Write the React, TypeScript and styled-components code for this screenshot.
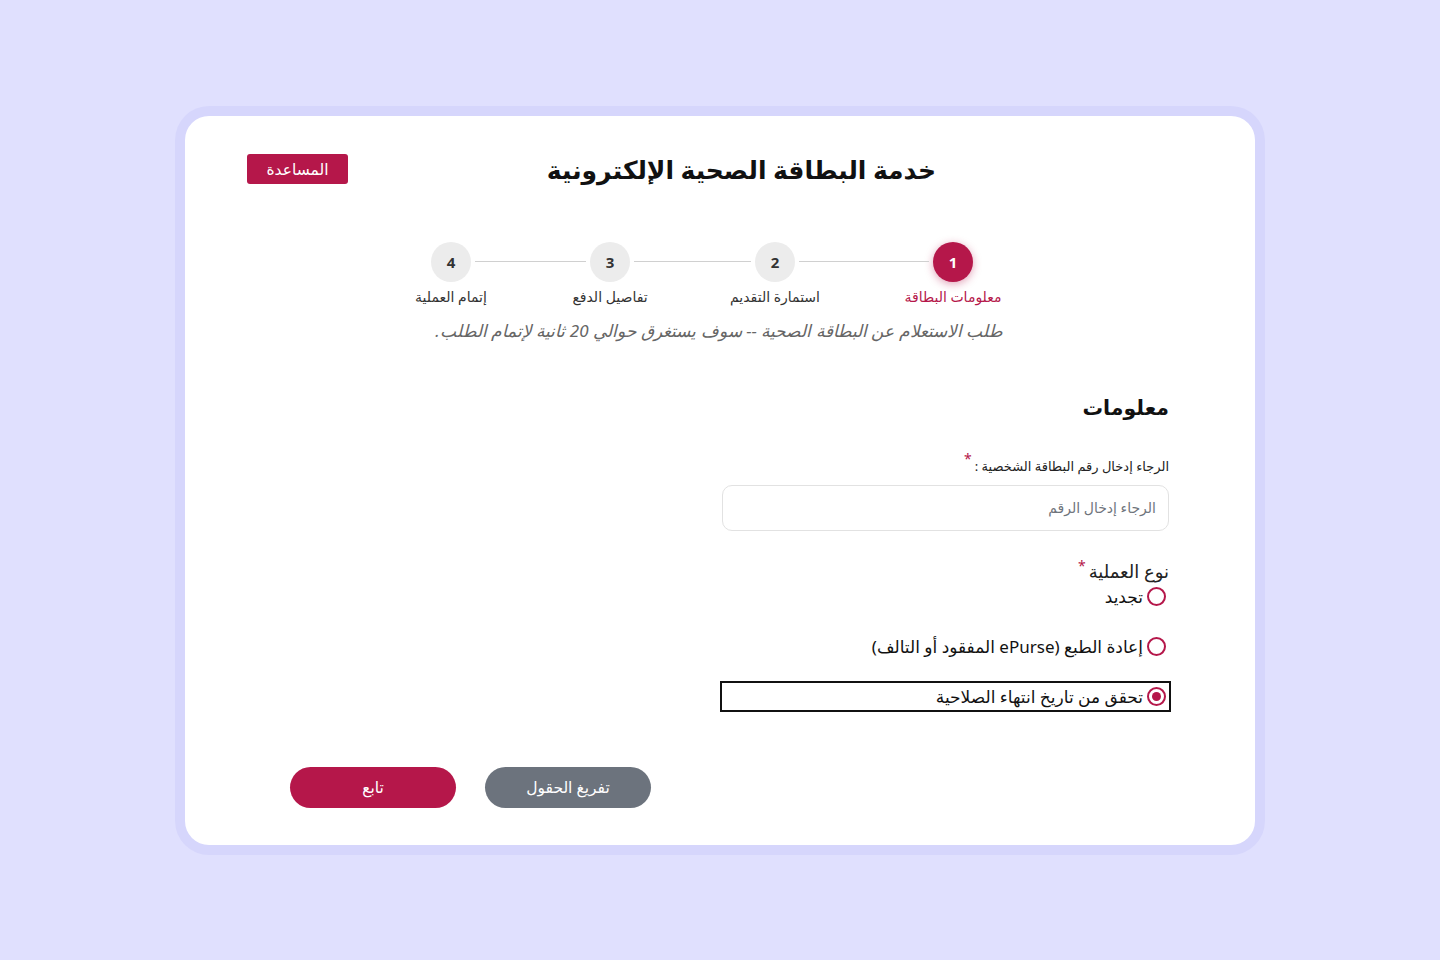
import React from "react";
import styled, { createGlobalStyle, css } from "styled-components";

const CRIMSON = "#b5174a";

const GlobalStyle = createGlobalStyle`
  html, body { margin: 0; padding: 0; }
  body {
    background: #e0e0fe;
    font-family: "Noto Sans", "DejaVu Sans", sans-serif;
    color: #111;
  }
  * { box-sizing: border-box; }
`;

const Page = styled.div`
  min-height: 100vh;
  display: flex;
  align-items: center;
  justify-content: center;
`;

const Frame = styled.div`
  padding: 10px;
  background: #d6d6fc;
  border-radius: 34px;
`;

const Card = styled.div`
  direction: rtl;
  width: 1070px;
  background: #fff;
  border-radius: 24px;
  padding: 38px 0 37px 0;
`;

const Header = styled.div`
  display: flex;
  align-items: center;
  justify-content: space-between;
  padding: 0 319px 0 62px;
  height: 30px;
`;

const Title = styled.h1`
  margin: 0;
  font-size: 25px;
  line-height: 30px;
  font-weight: 700;
  color: #111;
`;

const HelpButton = styled.button`
  width: 101px;
  height: 30px;
  border: none;
  border-radius: 3px;
  background: ${CRIMSON};
  color: #fff;
  font-family: inherit;
  font-size: 15.5px;
  line-height: 30px;
  padding: 0;
  cursor: pointer;
`;

const Stepper = styled.div`
  display: flex;
  align-items: flex-start;
  margin-top: 58px;
  padding-right: 282px;
`;

const Step = styled.div`
  width: 40px;
  display: flex;
  flex-direction: column;
  align-items: center;
`;

const Circle = styled.div<{ $active?: boolean }>`
  width: 40px;
  height: 40px;
  border-radius: 50%;
  display: flex;
  align-items: center;
  justify-content: center;
  font-family: "Noto Sans", sans-serif;
  font-weight: 700;
  font-size: 15px;
  ${(p) =>
    p.$active
      ? css`
          background: ${CRIMSON};
          color: #fff;
          box-shadow: 0 2px 8px rgba(181, 23, 74, 0.4);
        `
      : css`
          background: #ececec;
          color: #333;
        `}
`;

const StepLabel = styled.div<{ $active?: boolean }>`
  margin-top: 5px;
  white-space: nowrap;
  font-size: 14px;
  line-height: 20px;
  color: ${(p) => (p.$active ? CRIMSON : "#333")};
`;

const Connector = styled.div<{ $w: number }>`
  width: ${(p) => p.$w}px;
  height: 1px;
  margin: 19.5px 4px 0;
  background: #d0d0d0;
`;

const Description = styled.p`
  margin: 12px 0 0;
  padding-right: 252px;
  font-size: 17px;
  line-height: 24px;
  font-style: italic;
  color: #666;
`;

const FormSection = styled.div`
  width: 447px;
  margin-right: 86px;
  margin-top: 50px;
`;

const SectionTitle = styled.h2`
  margin: 0;
  font-size: 20.5px;
  line-height: 28px;
  font-weight: 700;
`;

const FieldLabel = styled.label`
  display: block;
  margin-top: 35px;
  font-size: 13px;
  line-height: 20px;
  color: #222;
`;

const Star = styled.span`
  display: inline-block;
  color: ${CRIMSON};
  font-size: 14px;
  line-height: 0;
  margin-right: 3px;
  position: relative;
  top: -7px;
`;

const TextInput = styled.input`
  display: block;
  width: 100%;
  height: 46px;
  margin-top: 9px;
  border: 1px solid #e2e2e2;
  border-radius: 10px;
  padding: 0 12px;
  font-family: inherit;
  font-size: 14px;
  direction: rtl;
  &::placeholder { color: #6f747c; }
  &:focus { outline: none; }
`;

const GroupLabel = styled.div`
  margin-top: 28px;
  font-size: 18px;
  line-height: 24px;
  color: #222;
`;

const RadioRow = styled.label<{ $focused?: boolean; $first?: boolean }>`
  display: flex;
  align-items: center;
  gap: 4px;
  height: 27px;
  margin-top: ${(p) => (p.$first ? "0" : "23px")};
  padding-right: 3px;
  font-size: 17px;
  color: #111;
  cursor: pointer;
  ${(p) =>
    p.$focused &&
    css`
      outline: 2px solid #111;
      outline-offset: 0px;
    `}
`;

const RadioCircle = styled.span<{ $checked?: boolean }>`
  width: 19px;
  height: 19px;
  border-radius: 50%;
  border: 2px solid ${CRIMSON};
  display: flex;
  align-items: center;
  justify-content: center;
  flex-shrink: 0;
  &::after {
    content: "";
    width: 9px;
    height: 9px;
    border-radius: 50%;
    background: ${(p) => (p.$checked ? CRIMSON : "transparent")};
  }
`;

const Actions = styled.div`
  display: flex;
  justify-content: flex-end;
  gap: 29px;
  margin-top: 57px;
  padding-left: 105px;
`;

const PillButton = styled.button<{ $variant: "primary" | "secondary" }>`
  width: 166px;
  height: 41px;
  border: none;
  border-radius: 21px;
  color: #fff;
  font-family: inherit;
  font-size: 15.5px;
  font-weight: 400;
  cursor: pointer;
  background: ${(p) => (p.$variant === "primary" ? CRIMSON : "#6c737d")};
`;

const steps = [
  { n: 1, label: "معلومات البطاقة", active: true },
  { n: 2, label: "استمارة التقديم" },
  { n: 3, label: "تفاصيل الدفع" },
  { n: 4, label: "إتمام العملية" },
];
const connectorWidths = [130, 117, 111];

const options = [
  { label: "تجديد" },
  { label: "إعادة الطبع (ePurse المفقود أو التالف)" },
  { label: "تحقق من تاريخ انتهاء الصلاحية", checked: true },
];

export default function App() {
  return (
    <>
      <GlobalStyle />
      <Page>
        <Frame>
          <Card>
            <Header>
              <Title>خدمة البطاقة الصحية الإلكترونية</Title>
              <HelpButton>المساعدة</HelpButton>
            </Header>

            <Stepper>
              {steps.map((s, i) => (
                <React.Fragment key={s.n}>
                  <Step>
                    <Circle $active={s.active}>{s.n}</Circle>
                    <StepLabel $active={s.active}>{s.label}</StepLabel>
                  </Step>
                  {i < steps.length - 1 && <Connector $w={connectorWidths[i]} />}
                </React.Fragment>
              ))}
            </Stepper>

            <Description>
              طلب الاستعلام عن البطاقة الصحية -- سوف يستغرق حوالي 20 ثانية لإتمام الطلب.
            </Description>

            <FormSection>
              <SectionTitle>معلومات</SectionTitle>
              <FieldLabel>
                الرجاء إدخال رقم البطاقة الشخصية :<Star>*</Star>
              </FieldLabel>
              <TextInput placeholder="الرجاء إدخال الرقم" />

              <GroupLabel>
                نوع العملية<Star>*</Star>
              </GroupLabel>
              {options.map((o, i) => (
                <RadioRow key={o.label} $first={i === 0} $focused={o.checked}>
                  <RadioCircle $checked={o.checked} />
                  <span>{o.label}</span>
                </RadioRow>
              ))}
            </FormSection>

            <Actions>
              <PillButton $variant="secondary">تفريغ الحقول</PillButton>
              <PillButton $variant="primary">تابع</PillButton>
            </Actions>
          </Card>
        </Frame>
      </Page>
    </>
  );
}
